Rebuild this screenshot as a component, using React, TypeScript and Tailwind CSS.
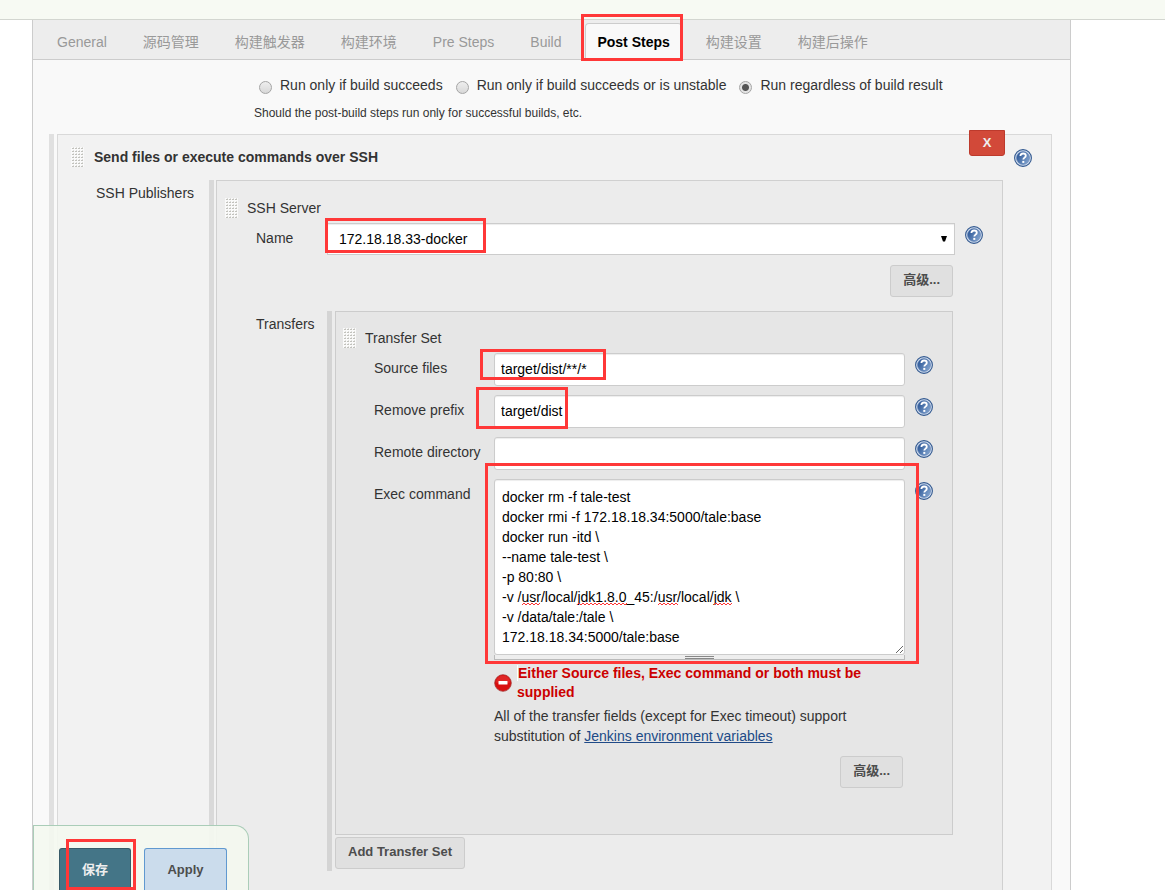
import { useId, type ReactNode } from 'react';
import clsx from 'clsx';

const tabs = ['General', '源码管理', '构建触发器', '构建环境', 'Pre Steps', 'Build', 'Post Steps', '构建设置', '构建后操作'];
const activeTab = 'Post Steps';

const runConditions = [
  { value: 'success', label: 'Run only if build succeeds' },
  { value: 'unstable', label: 'Run only if build succeeds or is unstable' },
  { value: 'always', label: 'Run regardless of build result' },
];

const execCommand = `docker rm -f tale-test
docker rmi -f 172.18.18.34:5000/tale:base
docker run -itd \\
--name tale-test \\
-p 80:80 \\
-v /usr/local/jdk1.8.0_45:/usr/local/jdk \\
-v /data/tale:/tale \\
172.18.18.34:5000/tale:base`;

// [start, end] of each misspelled word on the sixth line of the command
const misspelled = [
  [28, 46],
  [83, 133],
  [164, 184],
  [220, 238],
];

function squiggle(from: number, to: number) {
  let d = `M${from} 3`;
  for (let x = from + 2, up = true; x <= to; x += 2, up = !up) {
    d += ` L${x} ${up ? 1 : 3}`;
  }
  return d;
}

function Highlight({ className }: { className: string }) {
  return <span aria-hidden="true" className={clsx('pointer-events-none absolute z-10 border-[3px] border-[#ff3838]', className)} />;
}

function HelpButton({ className }: { className?: string }) {
  const id = useId();
  return (
    <button type="button" aria-label="Help" className={clsx('h-[18px] w-[18px] shrink-0', className)}>
      <svg viewBox="0 0 18 18" className="block h-[18px] w-[18px]">
        <defs>
          <linearGradient id={id} x1="0" y1="0" x2="1" y2="0.6">
            <stop offset="0" stopColor="#1f4b8e" />
            <stop offset="1" stopColor="#7d9fcb" />
          </linearGradient>
        </defs>
        <circle cx="9" cy="9" r="8.4" fill="#d3dff0" stroke="#33598f" strokeWidth="1.1" />
        <circle cx="9" cy="9" r="6.5" fill={`url(#${id})`} stroke="#5e80b3" strokeWidth="0.6" />
        <path d="M6.4 7.1C6.4 5.4 7.5 4.5 9.1 4.5c1.6 0 2.7.9 2.7 2.2 0 2-2.5 1.9-2.5 3.9" fill="none" stroke="#fff" strokeWidth="1.8" />
        <rect x="8.3" y="11.9" width="2" height="2" fill="#fff" />
      </svg>
    </button>
  );
}

function DragHandle() {
  return (
    <svg viewBox="0 0 13 20" className="h-5 w-[13px] shrink-0 cursor-move">
      <rect width="13" height="20" fill="#fafafa" />
      {[1, 4, 7, 10, 13, 16, 19].map((y) =>
        [1, 4, 7, 10].map((x) => (
          <g key={`${x}-${y}`}>
            <rect x={x} y={y} width="2" height="1" fill="#c2c2bd" />
            <rect x={x + 1} y={y - 1} width="1" height="1" fill="#dededb" />
          </g>
        )),
      )}
    </svg>
  );
}

function GrayButton({ children }: { children: ReactNode }) {
  return (
    <button
      type="button"
      className="h-8 rounded-[3px] border border-[#ccc] bg-[#e0e0e0] px-3 pb-[2px] text-[13px] leading-5 font-bold text-[#4d4d4d]"
    >
      {children}
    </button>
  );
}

interface TextRowProps {
  id: string;
  label: string;
  value: string;
  children?: ReactNode;
}

function TextRow({ id, label, value, children }: TextRowProps) {
  return (
    <div className="relative mb-[9px] flex items-start">
      <label htmlFor={id} className="mt-[5px] w-[158px] shrink-0 pl-[38px]">
        {label}
      </label>
      <input
        id={id}
        type="text"
        defaultValue={value}
        className="h-[33px] min-w-0 flex-1 rounded-[3px] border border-[#ccc] bg-white px-[6px] pb-[2px] text-black shadow-[inset_0_1px_1px_rgba(0,0,0,0.075)]"
      />
      <HelpButton className="mt-[3px] mr-[19px] ml-[10px]" />
      {children}
    </div>
  );
}

function TransferSet() {
  return (
    <div className="border border-[#ccc] bg-[#e6e6e6] pb-[46px]">
      <div className="flex h-[41px] items-start gap-[9px] pt-4 pl-[7px]">
        <DragHandle />
        <span>Transfer Set</span>
      </div>

      <TextRow id="source-files" label="Source files" value="target/dist/**/*">
        <Highlight className="-top-1 left-36 h-[31px] w-[126px]" />
      </TextRow>
      <TextRow id="remove-prefix" label="Remove prefix" value="target/dist">
        <Highlight className="-top-2 left-[140px] h-[42px] w-[92px]" />
      </TextRow>
      <TextRow id="remote-directory" label="Remote directory" value="" />

      <div className="relative flex items-start">
        <label htmlFor="exec-command" className="mt-[5px] w-[158px] shrink-0 pl-[38px]">
          Exec command
        </label>
        <div className="min-w-0 flex-1">
          <div className="relative">
            <textarea
              id="exec-command"
              rows={8}
              spellCheck={false}
              defaultValue={execCommand}
              className="block w-full resize-y rounded-[3px] border border-[#ccc] bg-white p-[7px] text-black shadow-[inset_0_1px_1px_rgba(0,0,0,0.075)]"
            />
            <svg aria-hidden="true" className="pointer-events-none absolute top-[123px] left-0 h-1 w-64">
              {misspelled.map(([from, to]) => (
                <path key={from} d={squiggle(from, to)} fill="none" stroke="#f33" strokeWidth="1" />
              ))}
            </svg>
          </div>
          <div className="flex h-[5px] items-end justify-center border-x border-b border-[#bbb] bg-[#eee]">
            <span className="h-[3px] w-[29px] border-y border-[#888]" />
          </div>

          <div className="mt-1 flex items-center gap-[5px]">
            <svg viewBox="0 0 18 18" className="h-[18px] w-[18px] shrink-0">
              <circle cx="9" cy="9" r="8.3" fill="#d90f0f" stroke="#a53535" strokeWidth="0.8" />
              <path d="M2 8.5a7 7 0 0 1 14 0q-7 2-14 0z" fill="#e02626" />
              <rect x="4.5" y="7" width="9" height="3.6" rx="0.6" fill="#fff" />
            </svg>
            <p className="leading-[19px] font-bold text-[#c00]">
              <span className="inline-block h-4 w-px bg-white align-text-bottom" />
              Either Source files, Exec command or both must be supplied
            </p>
          </div>
          <p className="mt-1">
            All of the transfer fields (except for Exec timeout) support substitution of{' '}
            <a href="#env-vars" className="text-[#204a87] underline">
              Jenkins environment variables
            </a>
          </p>
        </div>
        <HelpButton className="mt-[3px] mr-[19px] ml-[10px]" />
        <Highlight className="-top-4 right-[33px] left-[149px] h-[201px]" />
      </div>

      <div className="mt-[10px] mr-[49px] flex justify-end">
        <GrayButton>高级...</GrayButton>
      </div>
    </div>
  );
}

function SshServer() {
  return (
    <div className="min-w-0 flex-1 border border-b-0 border-[#d0d0d0] bg-[#ececec] pb-[19px]">
      <div className="flex h-[42px] items-start gap-[9px] pt-[17px] pl-2">
        <DragHandle />
        <span>SSH Server</span>
      </div>

      <div className="relative flex items-start">
        <label htmlFor="server-name" className="mt-[5px] w-[110px] shrink-0 pl-[39px]">
          Name
        </label>
        <div className="relative min-w-0 flex-1">
          <select
            id="server-name"
            className="block h-8 w-full appearance-none border border-[#ccc] bg-white pr-6 pl-[11px] text-black shadow-[inset_0_1px_1px_rgba(0,0,0,0.075)]"
          >
            <option>172.18.18.33-docker</option>
          </select>
          <svg aria-hidden="true" viewBox="0 0 6 6" className="pointer-events-none absolute top-[13px] right-2 h-[6px] w-[6px]">
            <path d="M0 0h6L4 5.5H2z" fill="#000" />
          </svg>
        </div>
        <HelpButton className="mt-[3px] mr-[19px] ml-[10px]" />
        <Highlight className="-top-[5px] left-[108px] h-[35px] w-[161px]" />
      </div>

      <div className="mt-[10px] mr-[49px] flex justify-end">
        <GrayButton>高级...</GrayButton>
      </div>

      <div className="mt-[14px] mr-[49px] flex">
        <div className="w-[110px] shrink-0 pt-[3px] pl-[39px]">Transfers</div>
        <div className="mr-[3px] w-[5px] shrink-0 bg-[#d4d4d4]" />
        <div className="min-w-0 flex-1 pb-[2px]">
          <TransferSet />
          <div className="mt-[2px]">
            <GrayButton>Add Transfer Set</GrayButton>
          </div>
        </div>
      </div>
    </div>
  );
}

export default function App() {
  return (
    <div className="flex min-h-screen flex-col bg-white font-['Liberation_Sans','Noto_Sans_CJK_SC',sans-serif] text-sm leading-5 text-[#333]">
      <header className="h-5 shrink-0 border-b border-[#d3d6d0] bg-[#f7faf3]" />

      <form className="mr-[94px] ml-8 flex flex-1 flex-col border-x border-[#ccc] bg-[#f9f9f9]">
        <nav className="flex h-10 shrink-0 items-end gap-3 border-b border-[#ccc] bg-[#ededed] pl-3 whitespace-nowrap">
          {tabs.map((tab) => (
            <div key={tab} className="relative">
              <button
                type="button"
                className={clsx(
                  'block h-9 rounded-t-[4px] border border-b-0 px-[11px]',
                  tab === activeTab ? 'border-[#ccc] bg-[#f9f9f9] font-bold text-black' : 'border-transparent text-[#999]',
                )}
              >
                {tab}
              </button>
              {tab === activeTab && <Highlight className="-top-[9px] -right-px -left-1 h-[47px]" />}
            </div>
          ))}
        </nav>

        <div className="flex flex-wrap items-start gap-x-[13px] pt-[15px] pl-[226px]">
          {runConditions.map(({ value, label }) => (
            <label key={value} className="flex items-start gap-2">
              <input
                type="radio"
                name="run-condition"
                value={value}
                defaultChecked={value === 'always'}
                className="mt-[6px] h-[13px] w-[13px] appearance-none rounded-full border border-[#a5a5a5] bg-linear-to-b from-[#eee] to-[#d8d8d8] checked:bg-[radial-gradient(circle,#555_3px,#e4e4e4_4px)]"
              />
              {label}
            </label>
          ))}
        </div>
        <p className="mt-2 mb-[11px] pl-[221px] text-xs leading-5">Should the post-build steps run only for successful builds, etc.</p>

        <div className="mr-[18px] ml-4 flex flex-1">
          <div className="mr-[3px] w-[5px] shrink-0 bg-[#e0e0e0]" />
          <section className="relative flex min-w-0 flex-1 flex-col border border-b-0 border-[#d9d9d9] bg-[#f2f2f2]">
            <button
              type="button"
              aria-label="Delete step"
              className="absolute -top-[5px] right-[46px] h-[26px] w-9 rounded-b-[3px] border border-[#bd3a2c] bg-[#d24939] text-[13px] leading-5 font-bold text-[#eee]"
            >
              X
            </button>
            <div className="flex h-[45px] shrink-0 items-start pt-3 pr-[19px] pl-[13px]">
              <DragHandle />
              <h2 className="ml-[10px] font-bold">Send files or execute commands over SSH</h2>
              <HelpButton className="mt-[2px] ml-auto" />
            </div>

            <div className="mr-12 flex flex-1">
              <div className="w-[151px] shrink-0 pt-[3px] pl-[38px]">SSH Publishers</div>
              <div className="mr-[2px] w-[5px] shrink-0 bg-[#d9d9d9]" />
              <SshServer />
            </div>
          </section>
        </div>
      </form>

      <div className="fixed bottom-0 left-[33px] z-20 flex h-[65px] items-end gap-[13px] rounded-tr-[14px] border border-b-0 border-[#aacdb8] bg-[#f4f8ef]/90 pr-[21px] pl-[25px]">
        <button type="submit" className="h-[42px] w-[72px] rounded-t-[3px] border border-b-0 border-[#375a68] bg-[#447587] text-[13px] font-bold text-[#eee]">
          保存
        </button>
        <button type="button" className="h-[42px] w-[83px] rounded-t-[3px] border border-b-0 border-[#6099d0] bg-[#cbdcec] text-[13px] font-bold text-[#4d4d4d]">
          Apply
        </button>
        <Highlight className="bottom-0 left-8 h-[51px] w-[70px]" />
      </div>
    </div>
  );
}
